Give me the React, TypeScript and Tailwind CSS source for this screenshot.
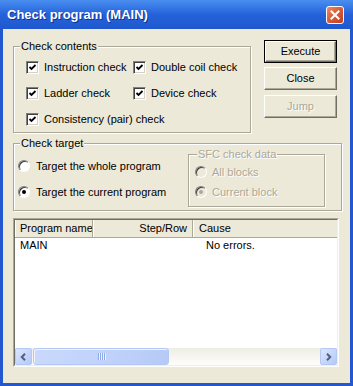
import React from 'react'

const Check = ({ label, w }: { label: string; w?: string }) => (
  <div className={`flex items-center h-[26px] ${w ?? ''}`}>
    <span className="w-[13px] h-[13px] shrink-0 bg-white border border-t-[#808080] border-l-[#808080] border-b-white border-r-white shadow-[inset_1px_1px_0_#404040,inset_-1px_-1px_0_#D4D0C8] flex items-center justify-center">
      <svg width="9" height="9" viewBox="0 0 9 9">
        <path d="M1.5 4 L3.5 6 L7.5 2" fill="none" stroke="#000" strokeWidth="1.8" />
      </svg>
    </span>
    <span className="ml-[5px] whitespace-nowrap">{label}</span>
  </div>
)

const Radio = ({
  label,
  checked,
  disabled,
  h,
  gap,
}: {
  label: string
  checked?: boolean
  disabled?: boolean
  h: string
  gap: string
}) => (
  <div className={`flex items-center ${h}`}>
    <span
      className={`w-[12px] h-[12px] shrink-0 rounded-full border border-t-[#808080] border-l-[#808080] border-b-white border-r-white shadow-[inset_1px_1px_0_#404040] flex items-center justify-center ${
        disabled ? 'bg-[#ECE9D8]' : 'bg-white'
      }`}
    >
      {checked && <span className={`w-[4px] h-[4px] rounded-full ${disabled ? 'bg-[#ACA899]' : 'bg-black'}`} />}
    </span>
    <span className={`${gap} whitespace-nowrap ${disabled ? 'text-[#ACA899] [text-shadow:1px_1px_0_#fff]' : ''}`}>
      {label}
    </span>
  </div>
)

const Group = ({
  title,
  className,
  disabled,
  labelPad,
  children,
}: {
  title: string
  className: string
  disabled?: boolean
  labelPad: string
  children: React.ReactNode
}) => (
  <div className={`border border-[#ACA899] shadow-[inset_1px_1px_0_#fff,1px_1px_0_#fff] flex flex-col ${className}`}>
    <span
      className={`self-start -mt-[7px] ${labelPad} px-[1px] bg-[#ECE9D8] leading-[13px] whitespace-nowrap ${
        disabled ? 'text-[#ACA899] [text-shadow:1px_1px_0_#fff]' : ''
      }`}
    >
      {title}
    </span>
    {children}
  </div>
)

const Btn = ({ label, def, disabled, mt }: { label: string; def?: boolean; disabled?: boolean; mt: string }) => (
  <div className={`w-[73px] h-[23px] ${mt} ${def ? 'border border-black' : ''}`}>
    <div className="w-full h-full border border-t-white border-l-white border-b-[#716F64] border-r-[#716F64] shadow-[inset_-1px_-1px_0_#ACA899] flex items-center justify-center">
      <span className={disabled ? 'text-[#ACA899] [text-shadow:1px_1px_0_#fff]' : ''}>{label}</span>
    </div>
  </div>
)

const ArrowBtn = ({ dir }: { dir: 'left' | 'right' }) => (
  <div className="w-[17px] h-[17px] rounded-[2px] border border-[#B4C8F6] bg-gradient-to-br from-[#DCE6FD] to-[#B4C9F6] flex items-center justify-center">
    <svg width="7" height="8" viewBox="0 0 7 8">
      <path
        d={dir === 'left' ? 'M5 0.8 L1.8 4 L5 7.2' : 'M2 0.8 L5.2 4 L2 7.2'}
        fill="none"
        stroke="#4D6185"
        strokeWidth="2"
      />
    </svg>
  </div>
)

export default function App() {
  return (
    <div className="w-[353px] h-[386px] bg-[#2257CF] flex flex-col font-['Liberation_Sans',Arial,sans-serif] text-[11px] leading-[13px] text-black">
      <div className="h-[29px] shrink-0 flex items-center pl-[7px] pr-[9px] bg-gradient-to-b from-[#4A8EF0] via-[#2462DA] to-[#1F58CE]">
        <span className="text-white font-bold text-[13px] leading-[16px] [text-shadow:1px_1px_0_#10318F]">
          Check program (MAIN)
        </span>
        <div className="ml-auto w-[18px] h-[18px] rounded-[3px] border border-white bg-gradient-to-br from-[#E98A6B] via-[#D95A36] to-[#C0401F] flex items-center justify-center">
          <svg width="10" height="10" viewBox="0 0 10 10">
            <path d="M1.5 1.5 L8.5 8.5 M8.5 1.5 L1.5 8.5" stroke="#fff" strokeWidth="2" strokeLinecap="square" />
          </svg>
        </div>
      </div>

      <div className="mx-[3px] mb-[3px] flex-1 bg-[#ECE9D8] pl-[10px] flex flex-col">
        <div className="flex mt-[11px]">
          <Group title="Check contents" labelPad="ml-[6px]" className="mt-[6px] w-[238px] h-[87px]">
            <div className="mt-[1px] pl-[12px]">
              <div className="flex">
                <Check label="Instruction check" w="w-[107px]" />
                <Check label="Double coil check" />
              </div>
              <div className="flex">
                <Check label="Ladder check" w="w-[107px]" />
                <Check label="Device check" />
              </div>
              <Check label="Consistency (pair) check" />
            </div>
          </Group>
          <div className="ml-[13px] flex flex-col">
            <Btn label="Execute" def mt="" />
            <Btn label="Close" mt="mt-[4px]" />
            <Btn label="Jump" disabled mt="mt-[5px]" />
          </div>
        </div>

        <Group title="Check target" labelPad="ml-[6px]" className="mt-[10px] w-[329px] h-[68px]">
          <div className="flex">
            <div className="mt-[3px] pl-[4px]">
              <Radio label="Target the whole program" h="h-[26px]" gap="ml-[6px]" />
              <Radio label="Target the current program" checked h="h-[26px]" gap="ml-[6px]" />
            </div>
            <Group
              title="SFC check data"
              disabled
              labelPad="ml-[8px]"
              className="ml-auto mr-[16px] mt-[4px] w-[137px] h-[53px]"
            >
              <div className="mt-[1px] pl-[6px]">
                <Radio label="All blocks" disabled h="h-[20px]" gap="ml-[5px]" />
                <Radio label="Current block" checked disabled h="h-[20px]" gap="ml-[5px]" />
              </div>
            </Group>
          </div>
        </Group>

        <div className="mt-[7px] w-[326px] h-[149px] border border-t-[#ACA899] border-l-[#ACA899] border-b-white border-r-white">
          <div className="w-full h-full bg-white border border-t-[#716F64] border-l-[#716F64] border-b-[#F1EFE2] border-r-[#F1EFE2] flex flex-col">
            <div className="h-[18px] shrink-0 flex bg-[#ECE9D8] border-b border-b-[#ACA899] whitespace-nowrap">
              <div className="w-[78px] shrink-0 pl-[5px] flex items-center overflow-hidden border-r border-r-[#ACA899] shadow-[inset_1px_0_0_#fff]">
                Program name
              </div>
              <div className="w-[100px] shrink-0 pr-[5px] flex items-center justify-end border-r border-r-[#ACA899] shadow-[inset_1px_0_0_#fff]">
                Step/Row
              </div>
              <div className="flex-1 pl-[6px] flex items-center shadow-[inset_1px_0_0_#fff]">Cause</div>
            </div>
            <div className="h-[14px] flex items-center whitespace-nowrap">
              <div className="w-[178px] shrink-0 pl-[5px]">MAIN</div>
              <div className="pl-[13px]">No errors.</div>
            </div>
            <div className="mt-auto h-[17px] shrink-0 flex bg-gradient-to-b from-[#EEEDE5] to-[#FDFDFA]">
              <ArrowBtn dir="left" />
              <div className="ml-[1px] w-[136px] h-full rounded-[3px] border border-[#B4C8F6] bg-gradient-to-r from-[#C9D8FC] via-[#C1D3FB] to-[#B6CAF7] shadow-[inset_1px_1px_0_#EEF3FE] flex items-center justify-center gap-[1px]">
                {[0, 1, 2, 3].map((i) => (
                  <span key={i} className="w-[1px] h-[7px] bg-[#8CA8E8] shadow-[1px_0_0_#EEF3FE]" />
                ))}
              </div>
              <div className="flex-1" />
              <ArrowBtn dir="right" />
            </div>
          </div>
        </div>
      </div>
    </div>
  )
}
